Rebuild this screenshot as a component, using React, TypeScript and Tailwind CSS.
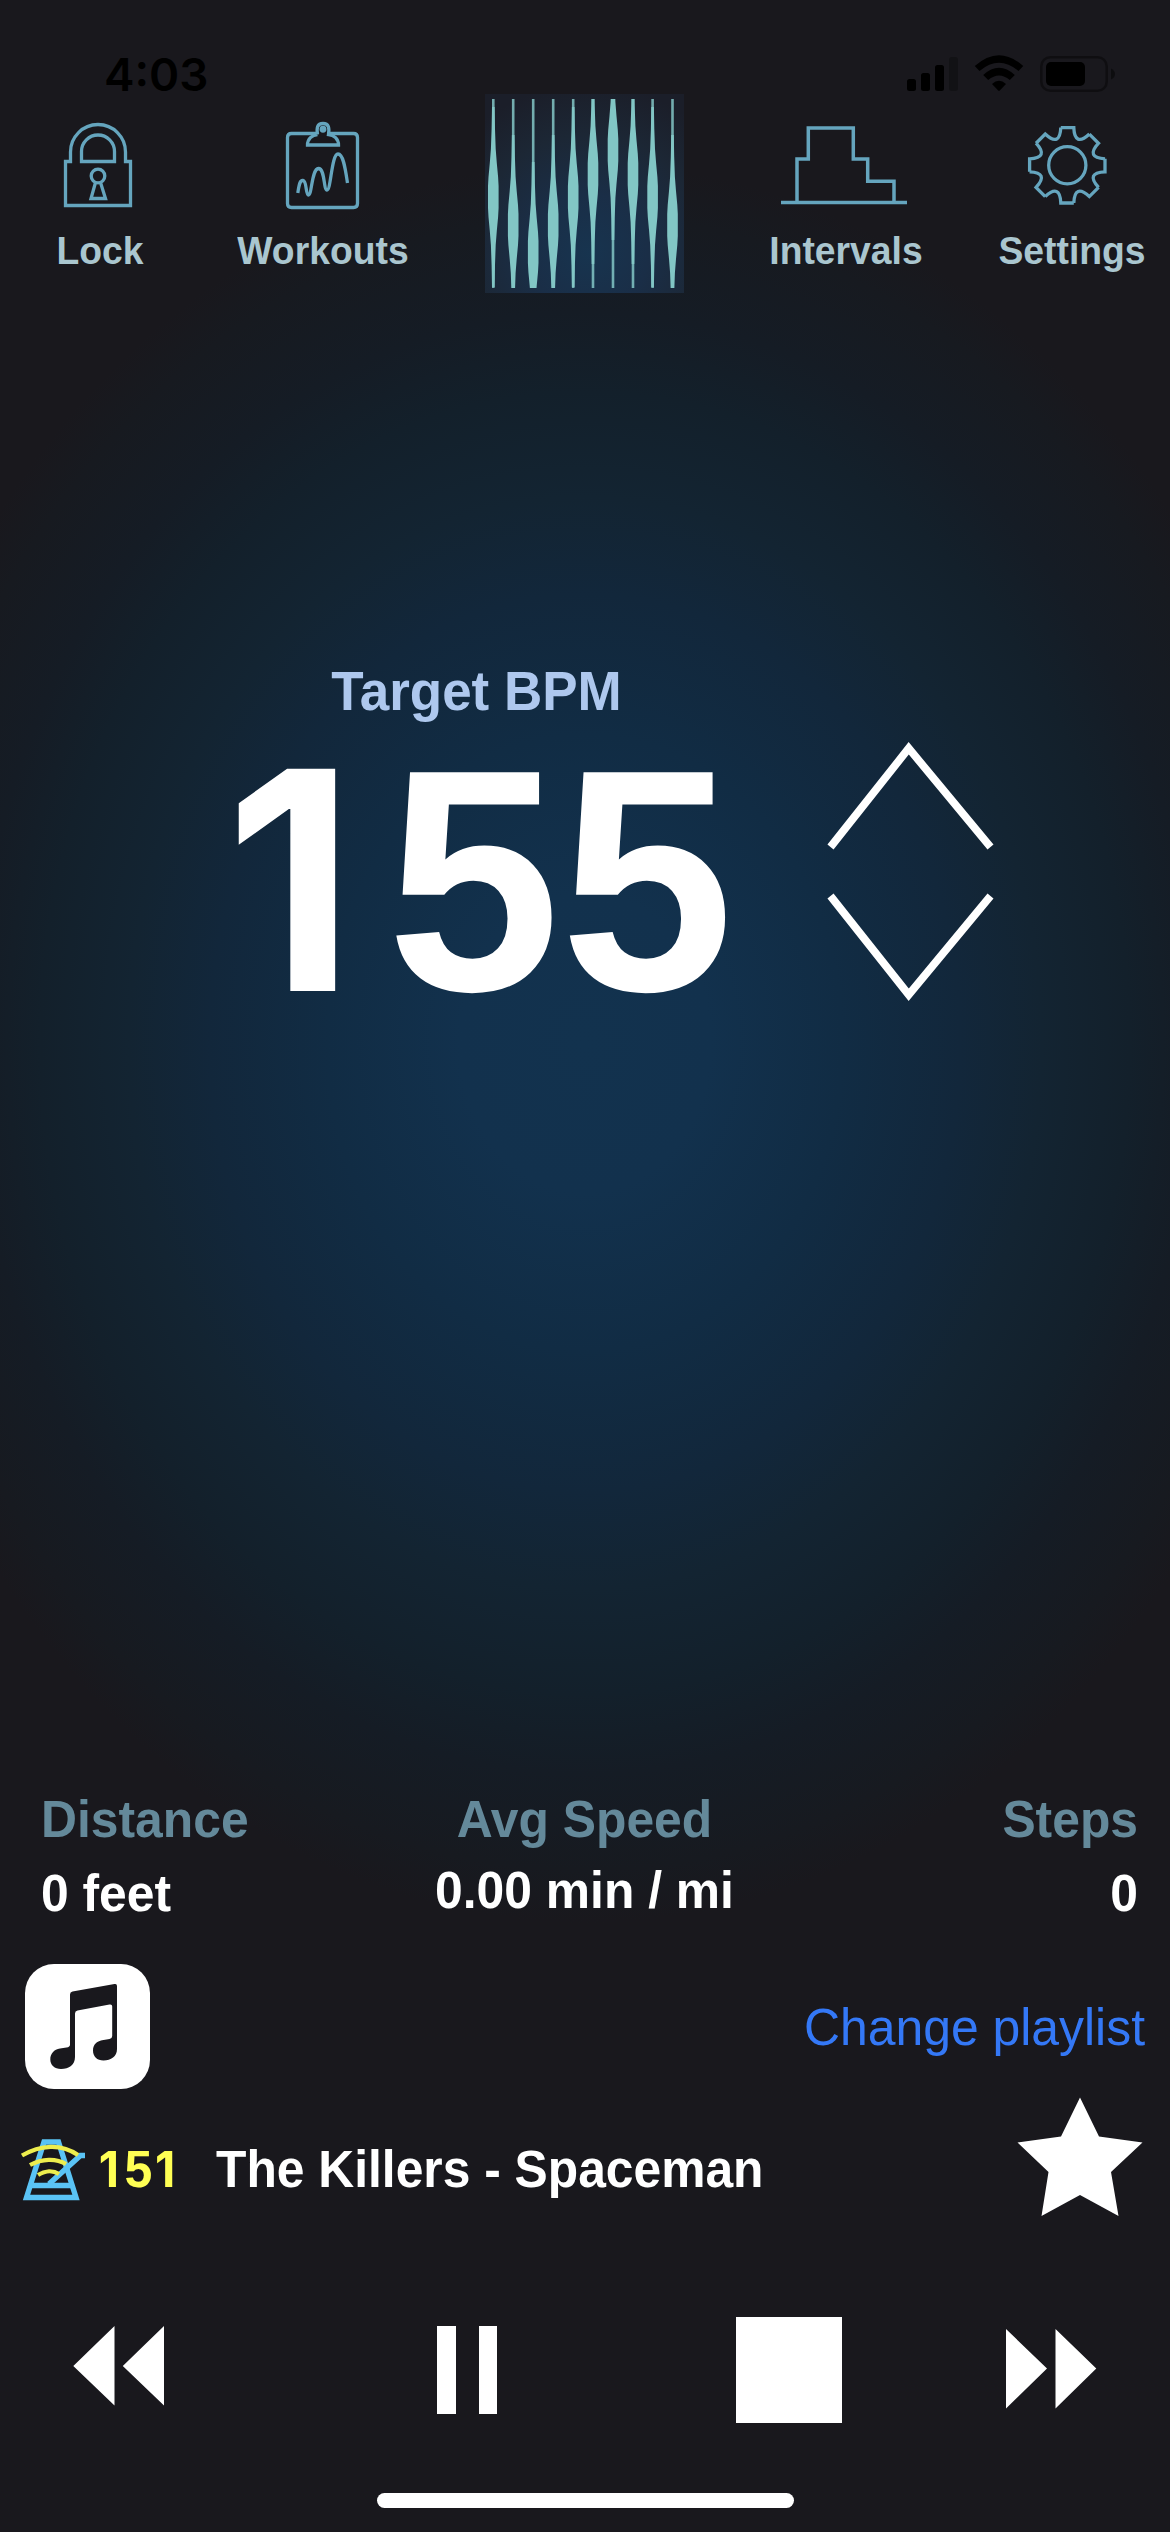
import React from "react";

const ICON = "#65a5be";

const BARS = [
  [492.3, 197],
  [512.2, 225],
  [532.2, 252],
  [552.2, 225],
  [572.2, 197],
  [592, 174],
  [612, 150],
  [632, 174],
  [651.6, 197],
  [671.5, 225],
];

const TEETH = [0, 45, 90, 135, 180, 225, 270, 315];

const PROFILE = [
  [1.3, -90],
  [1.7, -68],
  [2.4, -48],
  [3.5, -34],
  [4.8, -20],
  [5.3, -11],
  [5.3, 11],
  [4.8, 20],
  [3.5, 34],
  [2.4, 48],
  [1.7, 68],
  [1.3, 90],
];

function barPoints(c: number, y: number) {
  const right = PROFILE.map(([w, d]) => `${c + w},${y + d}`);
  const left = PROFILE.map(([w, d]) => `${c - w},${y + d}`).reverse();
  return [...right, ...left].join(" ");
}

function StatusBar() {
  return (
    <div className="flex h-[94px] items-start justify-between pl-[104px] pr-[53px] text-black">
      <span className="mt-[43px] font-['Inter',sans-serif] text-[45.800px] font-semibold leading-[64px]">4:03</span>
      <svg className="mt-[52px]" width="212" height="42" viewBox="905 52 212 42">
        <rect x="907" y="79" width="9" height="12" rx="2.5" />
        <rect x="921" y="73" width="9" height="18" rx="2.5" />
        <rect x="935" y="65" width="9" height="26" rx="2.5" />
        <rect x="949" y="57" width="9" height="34" rx="2.5" opacity="0.25" />
        <path d="M974.8 66 Q999 44.500 1023.200 66 L1018.500 71 Q999 54.500 979.500 71 Z" />
        <path d="M983.200 75 Q999 60.500 1014.800 75 L1009.800 80 Q999 71 988.200 80 Z" />
        <path d="M992 84 Q999 77.500 1006 84 L999.800 90.500 Q999 91.300 998.200 90.500 Z" />
        <rect x="1041.300" y="57.300" width="65.400" height="33.400" rx="9" fill="none" stroke="#000" strokeWidth="2.600" opacity="0.4" />
        <rect x="1046" y="62" width="39" height="24" rx="5" />
        <path d="M1111 68.500 Q1115 70.500 1115 74 Q1115 77.500 1111 79.500 Z" opacity="0.45" />
      </svg>
    </div>
  );
}

function NavItem({ label, children }: { label: string; children: React.ReactNode }) {
  return (
    <div className="flex flex-col items-center pt-[24px]">
      {children}
      <span className="origin-[50%_67%] scale-y-[1.060] whitespace-nowrap text-[37.300px] font-bold leading-[76px] text-[#aac6cf]">
        {label}
      </span>
    </div>
  );
}

function Header() {
  return (
    <div className="grid h-[200px] grid-cols-[200px_246px_276px_248px_204px]">
      <NavItem label="Lock">
        <svg width="80" height="95" viewBox="60 118 80 95" fill="none" stroke={ICON} strokeWidth="3.300">
          <path d="M65.500 161.500 H70.500 V152 A27.500 27.500 0 0 1 125.500 152 V161.500 H130.500 V205.500 H65.500 Z" />
          <path d="M81.500 161.500 V151.500 A16.500 16.500 0 0 1 114.500 151.500 V161.500 Z" />
          <circle cx="98" cy="176" r="6.800" />
          <path d="M95.500 182.500 L91 198.500 H105.500 L100.500 182.500" />
        </svg>
      </NavItem>
      <NavItem label="Workouts">
        <svg width="80" height="95" viewBox="283 118 80 95" fill="none" stroke={ICON} strokeWidth="3.300">
          <path d="M316 133.500 H291.500 Q287.500 133.500 287.500 137.500 V203.500 Q287.500 207.500 291.500 207.500 H353.500 Q357.500 207.500 357.500 203.500 V137.500 Q357.500 133.500 353.500 133.500 H330" />
          <path d="M317.500 134.500 C316.500 128 317 123.500 323 123.500 C329 123.500 329.500 128 328.500 134.500 C334 135 338.500 139 338.500 145 H307.500 C307.500 139 312 135 317.500 134.500" />
          <circle cx="323" cy="129.300" r="1.800" />
          <path d="M297.800 193 C299 186 299.500 180 303 180.500 C307 181 305.500 195 308.500 195 C312 195 311.500 169 318.500 168.500 C325 168.500 323.500 190 327 190 C331 190 331.500 154 338 154 C343.500 154 345.500 170 347.500 183" />
        </svg>
      </NavItem>
      <div className="flex justify-center">
        <svg width="199" height="199" viewBox="484 94 199 199">
          <defs>
            <radialGradient id="logoGlow" cx="52%" cy="80%" r="85%">
              <stop offset="0" stopColor="#17344f" />
              <stop offset="0.350" stopColor="#1a2e47" />
              <stop offset="0.700" stopColor="#1c2735" />
              <stop offset="1" stopColor="#1b1e29" />
            </radialGradient>
            <clipPath id="logoClip">
              <rect x="484" y="99" width="199" height="189" />
            </clipPath>
          </defs>
          <rect x="484" y="94" width="199" height="199" fill="url(#logoGlow)" />
          <g clipPath="url(#logoClip)" fill="#82c6c5">
            {BARS.map(([c, y]) => (
              <g key={c}>
                <rect x={c - 1.3} y="99" width="2.600" height="189" opacity="0.85" />
                <polygon points={barPoints(c, y)} />
              </g>
            ))}
          </g>
        </svg>
      </div>
      <NavItem label="Intervals">
        <svg width="132" height="95" viewBox="780 118 132 95" fill="none" stroke={ICON} strokeWidth="3.500">
          <path d="M781 202.500 H907" />
          <path d="M797 202.500 V159 H808.300 V128 H853.300 V159 H867.700 V181.300 H894 V202.500" />
        </svg>
      </NavItem>
      <NavItem label="Settings">
        <svg width="90" height="95" viewBox="1027 118 90 95" fill="none" stroke={ICON} strokeWidth="3.300">
          <circle cx="1067.300" cy="165.300" r="18.600" />
          <g transform="translate(1067.300 165.300)">
            {TEETH.map((a) => (
              <path key={a} transform={`rotate(${a})`} d="M-6.500 -37.700 H6.500 C7 -24.500 12.400 -22.300 22.100 -31.300" />
            ))}
          </g>
        </svg>
      </NavItem>
    </div>
  );
}

function Target() {
  return (
    <div className="flex h-[1496px] items-start pl-[213px] pt-[358px]">
      <div className="flex w-[521px] flex-col items-center">
        <span className="origin-[50%_73%] translate-x-[3px] scale-y-[1.045] text-[53px] font-bold leading-[80px] text-[#aec8ee]">
          Target BPM
        </span>
        <div className="-mt-[10px] flex origin-[50%_83%] scale-y-[1.015] text-[312px] font-bold leading-[320px] text-white">
          <span className="-ml-[10px] mr-[10px] w-[173.500px] text-center font-['Inter',sans-serif] text-[301px]">1</span>
          <span>55</span>
        </div>
      </div>
      <svg className="ml-[91px] mt-[85px]" width="172" height="270" viewBox="825 737 172 270" fill="none" stroke="#fff" strokeWidth="7.800">
        <path d="M830.500 847 L908.700 748.300 L990.500 847" />
        <path d="M830.500 896 L908.700 994.700 L990.500 896" />
      </svg>
    </div>
  );
}

function Stat({ label, value, align, lift }: { label: string; value: string; align: string; lift?: string }) {
  return (
    <div className={`flex flex-col gap-[14px] text-[49.800px] font-bold leading-[60px] ${align}`}>
      <span className="origin-[50%_79%] scale-y-[1.045] whitespace-nowrap text-[#64899a]">{label}</span>
      <span className={`origin-[50%_79%] scale-y-[1.045] whitespace-nowrap text-white ${lift ?? ""}`}>{value}</span>
    </div>
  );
}

function Playlist() {
  return (
    <div className="mt-[40px] flex h-[125px] items-center justify-between pl-[25px] pr-[25px]">
      <svg width="125" height="125" viewBox="25 1964 125 125">
        <rect x="25" y="1964" width="125" height="125" rx="29" fill="#fff" />
        <path
          fill="#19181d"
          d="M72.500 1991.500 L114.500 1984 Q117 1983.500 117 1986 V2049 C117 2056.500 111 2060.500 103.500 2060.500 C97 2060.500 93 2056.500 93 2050.500 C93 2044.500 97 2041.300 102 2040.300 L109.500 2039 Q112.200 2038.500 112.200 2036 V2006.500 Q112.200 2004 109.500 2004.500 L77.500 2010.500 Q75 2011 75 2013.500 V2057 C75 2065 69 2069 61 2069 C54.500 2069 50.300 2065 50.300 2059.500 C50.300 2053.500 54 2049.500 60 2048.500 L66.500 2047.500 Q70 2047 70 2044.500 V1994.500 Q70 1992 72.500 1991.500 Z"
        />
      </svg>
      <span className="mt-[3px] origin-[50%_79%] scale-y-[1.045] text-[49.900px] leading-[60px] text-[#3478f6]">Change playlist</span>
    </div>
  );
}

function Track() {
  return (
    <div className="flex h-[150px] items-start pl-[20px]">
      <svg className="mt-[47px]" width="68" height="68" viewBox="20 2136 68 68" fill="none">
        <g stroke="#5ac3f5" strokeWidth="5.400">
          <path d="M44 2142 H58.500 L76 2197.500 H26.500 Z" />
          <path d="M32 2185.500 H72" />
          <path d="M49 2184 L80.500 2155.500 H85" />
        </g>
        <g stroke="#eeee4e" strokeWidth="4.200">
          <path d="M22 2155.500 C40 2145 61 2143 78 2155" />
          <path d="M30 2165 C42 2158.500 56 2158 66 2164" />
          <path d="M38 2175 C45 2170.500 53 2170 59 2174" />
        </g>
      </svg>
      <div className="ml-[9px] mt-[51px] flex origin-[50%_79%] scale-y-[1.045] text-[50px] font-bold leading-[60px] text-[#ffff54]">
        <span className="-ml-[2px] mr-[2px] w-[27.600px] text-center font-['Inter',sans-serif] text-[47px]">1</span>
        <span>5</span>
        <span className="-ml-[1px] mr-[1px] w-[27.600px] text-center font-['Inter',sans-serif] text-[47px]">1</span>
      </div>
      <span className="ml-[36px] mt-[51px] origin-[50%_79%] scale-y-[1.045] whitespace-nowrap text-[49.750px] font-bold leading-[60px] text-white">
        The Killers - Spaceman
      </span>
      <svg className="ml-auto mr-[26px] mt-[7px]" width="128" height="124" viewBox="1016 2096 128 124" fill="#fff">
        <path d="M1080 2097.500 L1099 2136.500 L1142.500 2142.500 L1111 2172 L1118.500 2216 L1080 2195 L1041.500 2216 L1048.500 2172 L1017.500 2142.500 L1061 2136.500 Z" />
      </svg>
    </div>
  );
}

function Controls() {
  return (
    <div className="mt-[78px] flex h-[106px] items-start pl-[73px]">
      <svg className="mt-[9px]" width="92" height="80" viewBox="73 2326 92 80" fill="#fff">
        <path d="M73.300 2366 L114.500 2326 V2405.500 Z M122.800 2366 L164 2326 V2405.500 Z" />
      </svg>
      <div className="ml-[272px] mt-[9px] flex h-[88px] gap-[23px]">
        <div className="w-[18.500px] bg-white" />
        <div className="w-[18.500px] bg-white" />
      </div>
      <div className="ml-[239px] h-[106px] w-[106px] bg-white" />
      <svg className="ml-[163px] mt-[11px]" width="92" height="82" viewBox="1005 2328 92 82" fill="#fff">
        <path d="M1006 2329 L1047 2368.500 L1006 2408.500 Z M1055.500 2329 L1096.300 2368.500 L1055.500 2408.500 Z" />
      </svg>
    </div>
  );
}

export default function App() {
  return (
    <div className="flex h-[2532px] w-[1170px] flex-col overflow-hidden bg-[#19181d] bg-[radial-gradient(736px_880px_at_585px_1043px,#12324e_0%,#12314d_17%,#112c44_35%,#12273b_51%,#132432_62%,#13202b_74%,#151c25_83%,#171a20_94%,#19181d_100%)] font-['Liberation_Sans',Arial,sans-serif]">
      <StatusBar />
      <Header />
      <Target />
      <div className="flex justify-between pl-[41px] pr-[32px]">
        <div className="w-[340px]">
          <Stat label="Distance" value="0 feet" align="items-start" />
        </div>
        <Stat label="Avg Speed" value="0.00 min / mi" align="items-center" lift="-mt-[3px]" />
        <div className="w-[350px]">
          <Stat label="Steps" value="0" align="items-end" />
        </div>
      </div>
      <Playlist />
      <Track />
      <Controls />
      <div className="ml-[377px] mt-[70px] h-[15px] w-[417px] shrink-0 rounded-full bg-white" />
    </div>
  );
}
